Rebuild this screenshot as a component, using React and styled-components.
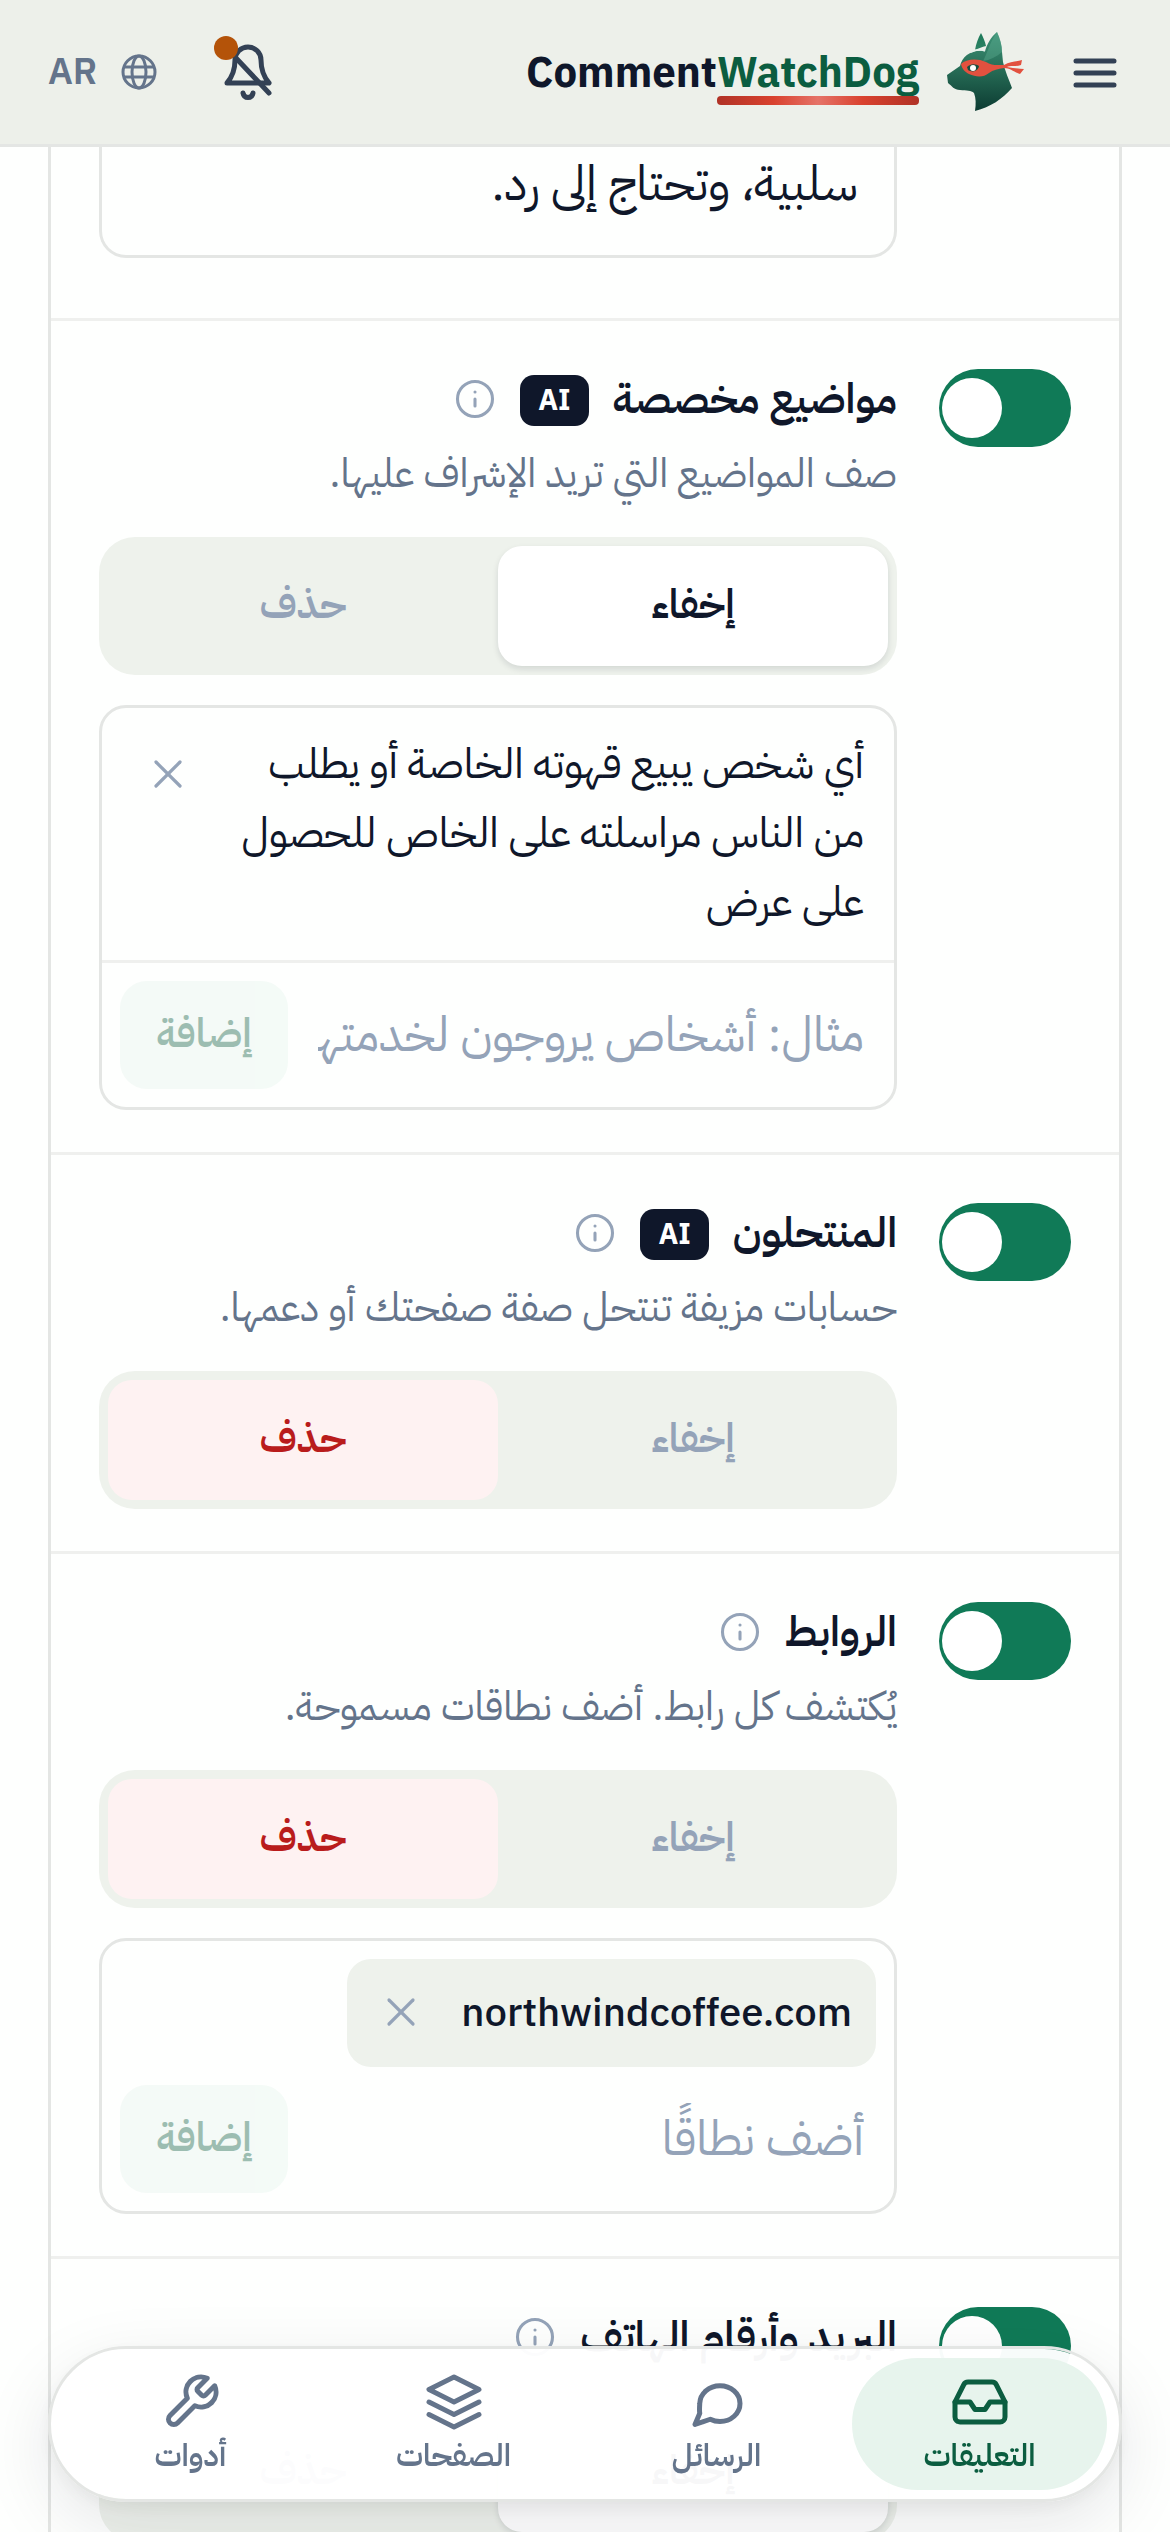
import React, { useState } from 'react';
import styled, { createGlobalStyle, ThemeProvider } from 'styled-components';
import { FiInbox, FiInfo, FiLayers, FiTool, FiX } from 'react-icons/fi';

const theme = {
  colors: {
    ink: '#0f172a',
    slate: '#334155',
    text: '#64748b',
    muted: '#94a3b8',
    line: '#e4e6e4',
    lineSoft: '#eff0ee',
    sage: '#eef2ec',
    header: '#edf0ea',
    green: '#107a57',
    greenDark: '#0b5d40',
    greenSoft: '#e7f4ed',
    amber: '#b45309',
  },
};

const GlobalStyle = createGlobalStyle`
  * {
    box-sizing: border-box;
  }

  body {
    margin: 0;
    background: #fefffe;
    font-family: 'IBM Plex Sans Arabic', 'Open Sans', 'Noto Sans Arabic', 'DejaVu Sans', sans-serif;
    color: ${theme.colors.ink};
  }

  button,
  input {
    font-family: inherit;
  }

  button {
    border: 0;
    padding: 0;
    background: none;
    color: inherit;
    cursor: pointer;
  }
`;

const Shell = styled.div`
  display: flex;
  flex-direction: column;
  height: 100vh;
  overflow: hidden;
`;

const Header = styled.header`
  display: flex;
  align-items: center;
  flex: none;
  height: 147px;
  padding: 0 48px;
  background: ${(props) => props.theme.colors.header};
  border-bottom: 3px solid ${(props) => props.theme.colors.line};
`;

const IconButton = styled.button`
  display: flex;
  position: relative;
  color: ${(props) => props.theme.colors.slate};
`;

const Brand = styled.a`
  display: flex;
  align-items: center;
  gap: 27px;
  margin-inline: 42px auto;
  color: ${(props) => props.theme.colors.ink};
  text-decoration: none;
`;

const Wordmark = styled.span`
  font-family: 'IBM Plex Sans', 'IBM Plex Sans Arabic', Roboto, sans-serif;
  font-size: 42px;
  font-weight: 700;
  line-height: 48px;
`;

const Accent = styled.span`
  position: relative;
  color: ${(props) => props.theme.colors.greenDark};

  &::after {
    content: '';
    position: absolute;
    left: 0;
    right: 0;
    bottom: -6px;
    height: 9px;
    border-radius: 4px;
    background: linear-gradient(90deg, #b03226, #d9422f 28%, #e57368 50%, #d9422f 72%, #b03226);
  }
`;

const AlertDot = styled.span`
  position: absolute;
  top: -6px;
  left: -9px;
  width: 24px;
  height: 24px;
  border-radius: 50%;
  background: ${(props) => props.theme.colors.amber};
`;

const Language = styled.button`
  display: flex;
  align-items: center;
  gap: 24px;
  margin-inline-start: 66px;
  font-size: 37px;
  font-weight: 600;
  line-height: 48px;
  color: ${(props) => props.theme.colors.text};
`;

const Main = styled.main`
  flex: 1;
  min-height: 0;
  overflow: hidden;
  padding: 0 48px;
`;

const Card = styled.div`
  border: solid ${(props) => props.theme.colors.line};
  border-width: 0 3px;
`;

const Row = styled.section`
  display: flex;
  align-items: flex-start;
  gap: 42px;
  padding: ${(props) => (props.$first ? '0 48px 60px' : '48px 48px 42px')};
  border-top: ${(props) => (props.$first ? 0 : 3)}px solid ${(props) => props.theme.colors.lineSoft};
`;

const Switch = styled.input`
  display: flex;
  justify-content: flex-end;
  align-items: center;
  appearance: none;
  flex: none;
  width: 132px;
  height: 78px;
  margin: 0;
  padding: 3px;
  border-radius: 39px;
  background: ${(props) => props.theme.colors.green};

  &:not(:checked) {
    justify-content: flex-start;
    background: ${(props) => props.theme.colors.muted};
  }

  &::before {
    content: '';
    width: 60px;
    height: 60px;
    border-radius: 50%;
    background: #fff;
  }
`;

const SwitchSpace = styled.div`
  flex: none;
  width: 132px;
`;

const RowBody = styled.div`
  flex: 1;
  min-width: 0;
`;

const TitleLine = styled.div`
  display: flex;
  align-items: center;
  gap: 24px;
  height: 63px;
`;

const Title = styled.label`
  padding-bottom: 3px;
  font-size: 42px;
  font-weight: 600;
  line-height: 60px;
`;

const AiBadge = styled.span`
  display: flex;
  align-items: center;
  height: 51px;
  padding: 0 18px;
  border-radius: 14px;
  background: ${(props) => props.theme.colors.ink};
  color: #fff;
  font-size: 29px;
  font-weight: 700;
`;

const InfoButton = styled(IconButton)`
  padding-bottom: 3px;
  color: ${(props) => props.theme.colors.muted};
`;

const Description = styled.p`
  margin: 12px 0 0;
  font-size: 40px;
  line-height: 60px;
  color: ${(props) => props.theme.colors.text};
`;

const Segments = styled.div`
  display: flex;
  margin-top: 33px;
  padding: 9px;
  border-radius: 36px;
  background: ${(props) => props.theme.colors.sage};
`;

const tones = {
  idle: { color: '#94a3b8', background: 'transparent', shadow: 'none' },
  hide: { color: '#0f172a', background: '#fff', shadow: '0 3px 6px rgba(15, 23, 42, 0.12)' },
  remove: { color: '#b91c1c', background: '#fef2f2', shadow: 'none' },
};

const Segment = styled.button`
  flex: 1;
  height: 120px;
  padding-bottom: 3px;
  border-radius: 24px;
  font-size: 40px;
  font-weight: 600;
  color: ${(props) => tones[props.$tone].color};
  background: ${(props) => tones[props.$tone].background};
  box-shadow: ${(props) => tones[props.$tone].shadow};
`;

const Box = styled.div`
  margin-top: 30px;
  border: 3px solid ${(props) => props.theme.colors.line};
  border-radius: 27px;
`;

const ReplyBox = styled.div`
  flex: 1;
  height: 111px;
  padding: 3px 36px;
  border: 3px solid ${(props) => props.theme.colors.line};
  border-top: 0;
  border-radius: 0 0 27px 27px;
  font-size: 48px;
  line-height: 69px;
`;

const Topic = styled.div`
  display: flex;
  align-items: flex-start;
  gap: 30px;
  padding: 21px 30px 24px 42px;
  border-bottom: 3px solid ${(props) => props.theme.colors.lineSoft};
`;

const TopicText = styled.p`
  flex: 1;
  margin: 0;
  font-size: 42px;
  line-height: 69px;
`;

const TopicRemove = styled(InfoButton)`
  margin-top: 21px;
`;

const AddForm = styled.form`
  display: flex;
  align-items: center;
  gap: 12px;
  padding: 18px;
`;

const AddInput = styled.input`
  flex: 1;
  min-width: 0;
  height: 108px;
  padding: 0 12px 0 18px;
  border: 0;
  outline: 0;
  background: none;
  font-size: 48px;
  color: ${(props) => props.theme.colors.ink};

  &::placeholder {
    color: ${(props) => props.theme.colors.muted};
    opacity: 1;
  }
`;

const AddButton = styled.button`
  flex: none;
  width: 168px;
  height: 108px;
  padding-bottom: 3px;
  border-radius: 27px;
  background: ${(props) => props.theme.colors.greenSoft};
  color: ${(props) => props.theme.colors.greenDark};
  font-size: 40px;
  font-weight: 600;
  opacity: 0.4;
`;

const Chips = styled.div`
  display: flex;
  flex-wrap: wrap;
  padding: 18px 18px 0;
`;

const Chip = styled.span`
  display: flex;
  align-items: center;
  gap: 36px;
  height: 108px;
  padding: 0 24px 0 30px;
  border-radius: 24px;
  background: ${(props) => props.theme.colors.sage};
  font-size: 40px;
  font-weight: 500;
`;

const TabBar = styled.nav`
  position: fixed;
  left: 48px;
  right: 48px;
  bottom: 30px;
  display: flex;
  gap: 8px;
  height: 156px;
  padding: 9px 12px;
  border: 3px solid ${(props) => props.theme.colors.line};
  border-radius: 78px;
  background: rgba(255, 255, 255, 0.97);
  background-clip: padding-box;
  box-shadow: 0 24px 72px rgba(15, 23, 42, 0.1), 0 6px 18px rgba(15, 23, 42, 0.05);
`;

const Tab = styled.a`
  flex: 1;
  display: flex;
  flex-direction: column;
  align-items: center;
  justify-content: center;
  gap: 3px;
  border-radius: 66px;
  background: ${(props) => (props.$active ? props.theme.colors.greenSoft : 'transparent')};
  color: ${(props) => (props.$active ? props.theme.colors.greenDark : props.theme.colors.text)};
  font-size: 31px;
  font-weight: 600;
  line-height: 42px;
  text-decoration: none;
`;

const MenuIcon = () => (
  <svg width="54" height="54" viewBox="0 0 54 54" fill="none" stroke="currentColor" strokeWidth="5" strokeLinecap="round">
    <path d="M8 16h38M8 28h38M8 40h38" />
  </svg>
);

const GlobeIcon = () => (
  <svg width="36" height="36" viewBox="0 0 36 36" fill="none" stroke="currentColor" strokeWidth="3">
    <circle cx="18" cy="18" r="16" />
    <ellipse cx="18" cy="18" rx="7" ry="16" />
    <path d="M3 13h30M3 23h30" />
  </svg>
);

const BellOffIcon = () => (
  <svg width="50" height="60" viewBox="0 0 50 60" fill="none" stroke="currentColor" strokeWidth="5" strokeLinecap="round" strokeLinejoin="round">
    <path d="M4 41c6-7 8-14 8-23a13 13 0 0 1 26 0c0 9 2 16 8 23z" />
    <path d="M12 15l34 36M20 51c1 6 9 6 10 0" />
  </svg>
);

const BubbleIcon = ({ size }) => (
  <svg width={size} height={size} viewBox="0 0 24 24" fill="none" stroke="currentColor" strokeWidth="2" strokeLinecap="round" strokeLinejoin="round">
    <path d="M21.2 12.6c0 4-3.6 7.2-8 7.2-1.4 0-2.7-.3-3.9-.9L3.2 21l1.9-4.5c-.2-1-.1-2.3 0-3.9.1-4 3.7-7.1 8.1-7.1s8 3.1 8 7.1z" />
  </svg>
);

const DogLogo = () => (
  <svg width="80" height="80" viewBox="6 8 80 80">
    <defs>
      <linearGradient id="fur" x1="0" y1="0" x2="0" y2="1">
        <stop offset="0" stopColor="#3d9276" />
        <stop offset="0.5" stopColor="#256a54" />
        <stop offset="1" stopColor="#0c3b32" />
      </linearGradient>
      <linearGradient id="ear" x1="0" y1="0" x2="0" y2="1">
        <stop offset="0" stopColor="#1c7a59" />
        <stop offset="1" stopColor="#2d8264" />
      </linearGradient>
    </defs>
    <path d="M35 26C36 20 38 14 41 9C43 13 45 17 46 22C42 23 39 24 35 26Z" fill="url(#ear)" />
    <path d="M45 27C47 20 51 13 57 8C60 15 62 21 62 28L63 38C65 47 69 56 72 64C62 75 51 83 35 87C36 80 36 74 34 69C31 66 27 67 20 66C14 66 12 62 8 59L7 51L20 42C22 32 32 25 45 27Z" fill="url(#fur)" />
    <path d="M57 8C60 15 62 21 62 28C56 33 50 36 43 37C47 30 49 20 57 8Z" fill="#5fae94" opacity="0.4" />
    <path d="M31 28Q38 24 45 27" fill="none" stroke="#e4f1eb" strokeWidth="1.5" />
    <path d="M21 40C26 35 37 34 46 38C52 42 57 41 64 41C70 37 76 38 82 36L81 41C75 43 70 41 67 43C74 44 79 45 84 45L80 50C74 48 70 44 64 44C58 45 53 46 49 49C43 54 36 53 29 50C25 48 22 45 21 40Z" fill="#e2513f" />
    <path d="M27 43C31 39 36 40 39 42C38 47 33 49 28 46Z" fill="#174f40" />
    <circle cx="33" cy="44" r="3" fill="#fff" />
  </svg>
);

const Info = () => (
  <InfoButton aria-label="معلومات">
    <FiInfo size={42} strokeWidth={1.75} />
  </InfoButton>
);

const ActionPicker = ({ initial }) => {
  const [action, setAction] = useState(initial);
  return (
    <Segments role="group">
      <Segment
        type="button"
        aria-pressed={action === 'hide'}
        $tone={action === 'hide' ? 'hide' : 'idle'}
        onClick={() => setAction('hide')}
      >
        إخفاء
      </Segment>
      <Segment
        type="button"
        aria-pressed={action === 'remove'}
        $tone={action === 'remove' ? 'remove' : 'idle'}
        onClick={() => setAction('remove')}
      >
        حذف
      </Segment>
    </Segments>
  );
};

const AddRow = ({ placeholder }) => (
  <AddForm onSubmit={(e) => e.preventDefault()}>
    <AddInput type="text" placeholder={placeholder} aria-label={placeholder} />
    <AddButton type="submit">إضافة</AddButton>
  </AddForm>
);

const Rule = ({ id, title, ai, description, action, children }) => (
  <Row>
    <Switch type="checkbox" id={id} defaultChecked />
    <RowBody>
      <TitleLine>
        <Title htmlFor={id}>{title}</Title>
        {ai && <AiBadge>AI</AiBadge>}
        <Info />
      </TitleLine>
      {description && <Description>{description}</Description>}
      <ActionPicker initial={action} />
      {children}
    </RowBody>
  </Row>
);

const tabs = [
  { label: 'التعليقات', Icon: FiInbox, active: true },
  { label: 'الرسائل', Icon: BubbleIcon },
  { label: 'الصفحات', Icon: FiLayers },
  { label: 'أدوات', Icon: FiTool },
];

const App = () => {
  return (
    <ThemeProvider theme={theme}>
      <GlobalStyle />
      <Shell dir="rtl" lang="ar">
        <Header>
          <IconButton aria-label="القائمة">
            <MenuIcon />
          </IconButton>
          <Brand href="#home">
            <DogLogo />
            <Wordmark dir="ltr">
              Comment<Accent>WatchDog</Accent>
            </Wordmark>
          </Brand>
          <IconButton aria-label="الإشعارات">
            <BellOffIcon />
            <AlertDot />
          </IconButton>
          <Language>
            <GlobeIcon />
            AR
          </Language>
        </Header>

        <Main>
          <Card>
            <Row $first>
              <SwitchSpace />
              <ReplyBox>سلبية، وتحتاج إلى رد.</ReplyBox>
            </Row>
            <Rule
              id="topics"
              title="مواضيع مخصصة"
              ai
              description="صف المواضيع التي تريد الإشراف عليها."
              action="hide"
            >
              <Box>
                <Topic>
                  <TopicText>
                    أي شخص يبيع قهوته الخاصة أو يطلب من الناس مراسلته على الخاص للحصول على عرض
                  </TopicText>
                  <TopicRemove aria-label="إزالة">
                    <FiX size={48} strokeWidth={1.6} />
                  </TopicRemove>
                </Topic>
                <AddRow placeholder="مثال: أشخاص يروجون لخدمتهم" />
              </Box>
            </Rule>
            <Rule
              id="impostors"
              title="المنتحلون"
              ai
              description="حسابات مزيفة تنتحل صفة صفحتك أو دعمها."
              action="remove"
            />
            <Rule
              id="links"
              title="الروابط"
              description="يُكتشف كل رابط. أضف نطاقات مسموحة."
              action="remove"
            >
              <Box>
                <Chips>
                  <Chip>
                    northwindcoffee.com
                    <InfoButton aria-label="إزالة">
                      <FiX size={48} strokeWidth={1.6} />
                    </InfoButton>
                  </Chip>
                </Chips>
                <AddRow placeholder="أضف نطاقًا" />
              </Box>
            </Rule>
            <Rule id="contacts" title="البريد وأرقام الهاتف" action="hide" />
          </Card>
        </Main>

        <TabBar>
          {tabs.map(({ label, Icon, active }) => (
            <Tab key={label} href="#" $active={active} aria-current={active ? 'page' : undefined}>
              <Icon size={60} />
              {label}
            </Tab>
          ))}
        </TabBar>
      </Shell>
    </ThemeProvider>
  );
};

export default App;
